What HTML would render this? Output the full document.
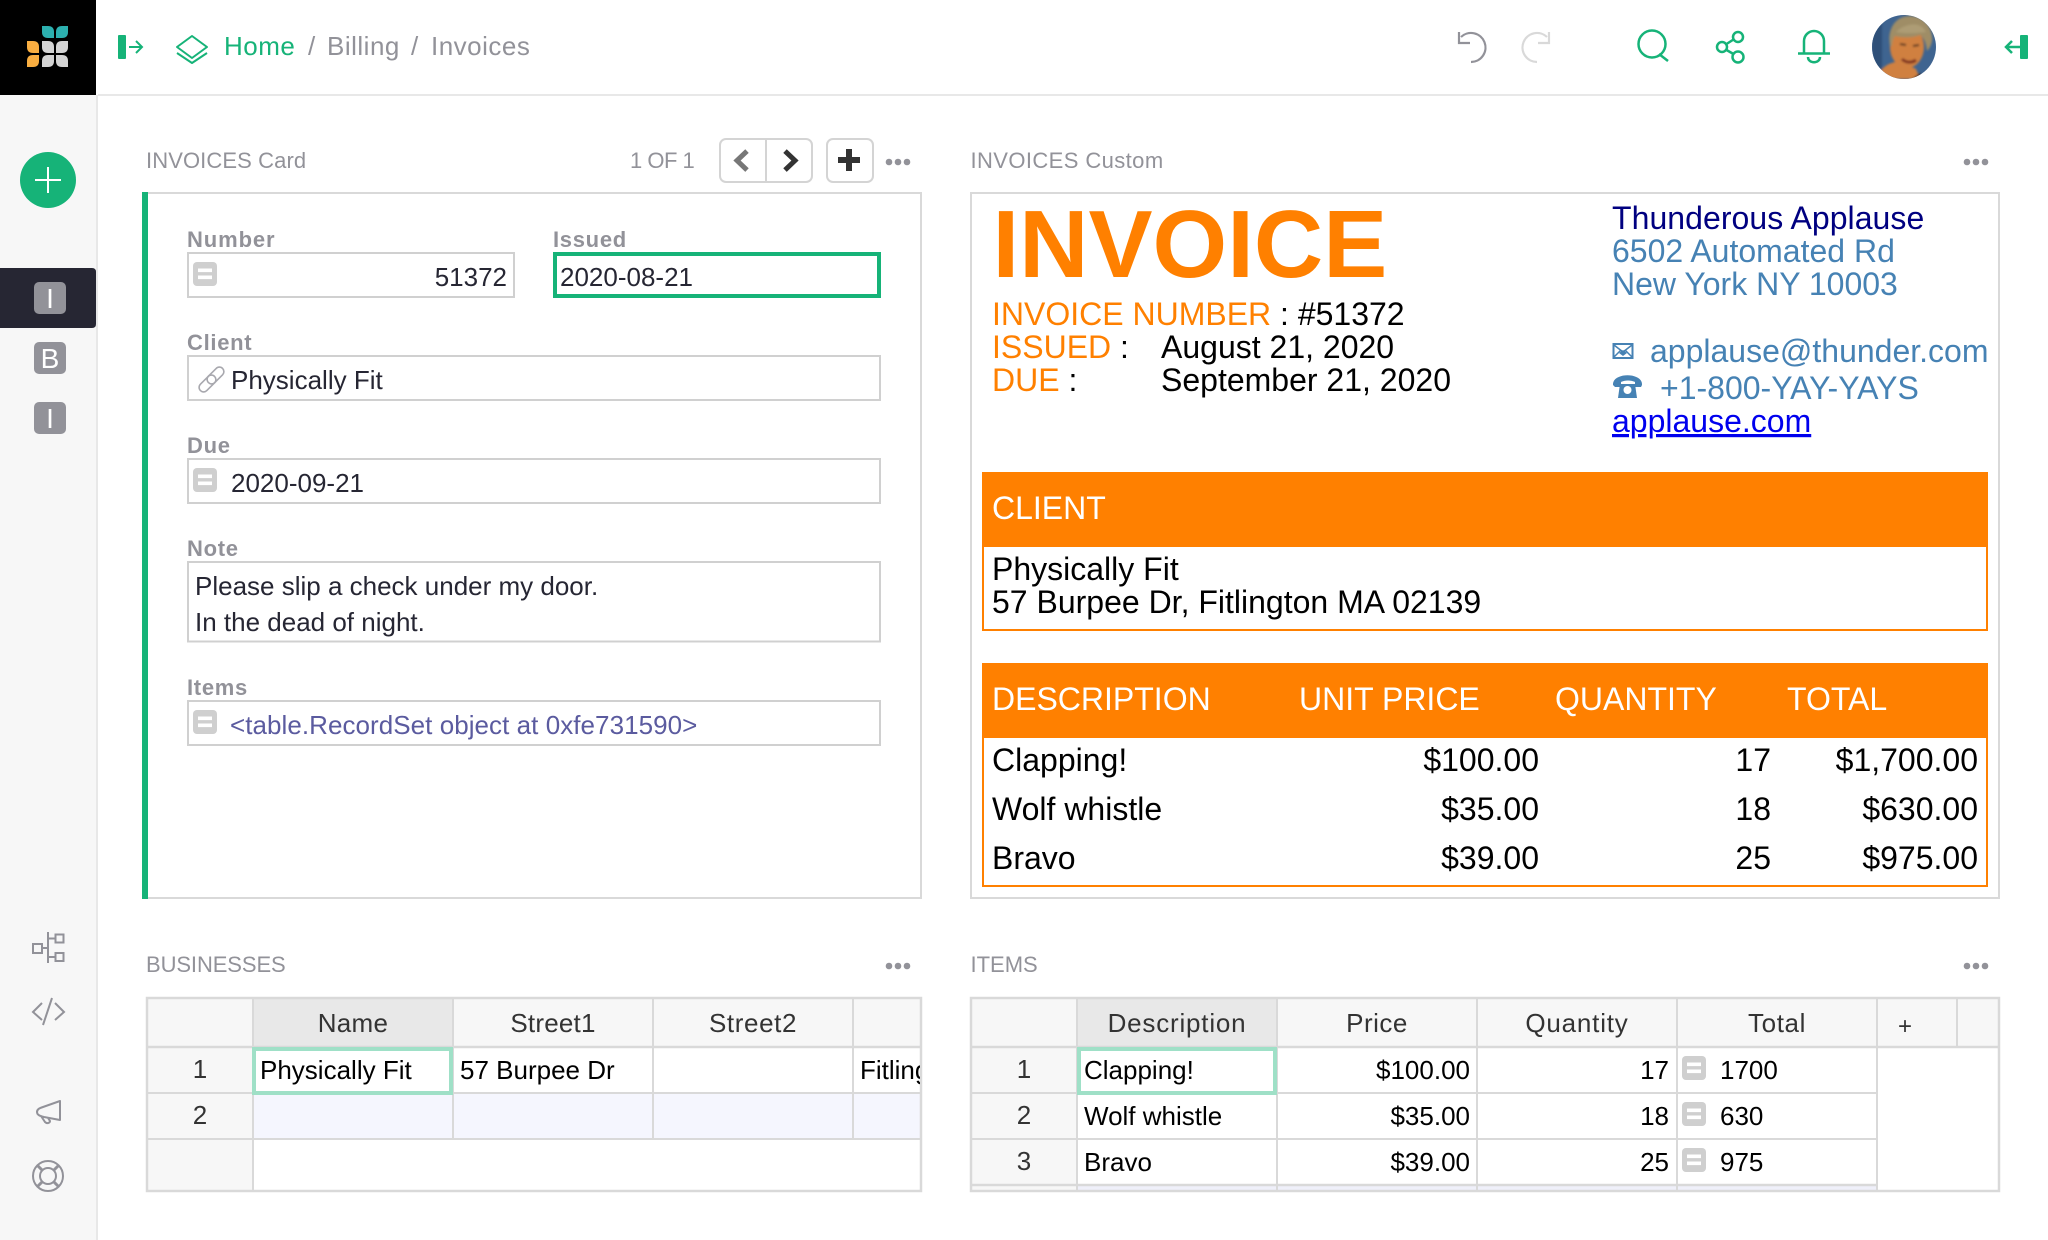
<!DOCTYPE html>
<html lang="en">
<head>
<meta charset="utf-8">
<title>Invoices</title>
<style>
html,body{margin:0;padding:0;background:#fff;width:2048px;height:1240px;overflow:hidden}
svg{display:block}
text{font-family:"Liberation Sans",sans-serif;white-space:pre}
.h{font-size:26px;fill:#929299;letter-spacing:.5px}
.g{font-size:26px;fill:#16b378;letter-spacing:.5px}
.l{font-size:22px;fill:#929299}
.b{font-size:22px;fill:#929299;font-weight:bold;letter-spacing:.7px}
.v{font-size:26px;fill:#262633}
.c{font-size:26px;fill:#000}
.n{font-size:26px;fill:#333;text-anchor:middle}
.e{text-anchor:end}
.i{font-size:32px;fill:#000}
.o{font-size:32px;fill:#ff8000}
.w{font-size:32px;fill:#fff}
.s{font-size:32px;fill:#4682b4}
.m{font-size:28px;fill:#fff;text-anchor:middle}
</style>
</head>
<body>
<svg width="2048" height="1240" viewBox="0 0 2048 1240" xmlns="http://www.w3.org/2000/svg">
<defs>
<g id="eq"><rect width="24" height="24" rx="4" fill="#cfcfcf"/><rect x="5" y="6.5" width="14" height="3.6" fill="#fff"/><rect x="5" y="13.5" width="14" height="3.6" fill="#fff"/></g>
<clipPath id="av"><circle cx="1904" cy="47" r="32"/></clipPath>
<clipPath id="fit"><rect x="853" y="1048" width="67" height="45"/></clipPath>
<filter id="bl" x="-10%" y="-10%" width="120%" height="120%"><feGaussianBlur stdDeviation="1"/></filter>
</defs>

<!-- sidebar + header -->
<rect x="0" y="95" width="96" height="1145" fill="#f7f7f7"/>
<rect x="96" y="95" width="2" height="1145" fill="#e8e8e8"/>
<rect x="98" y="94" width="1950" height="2" fill="#e8e8e8"/>
<rect x="0" y="0" width="96" height="95" fill="#000"/>

<!-- logo -->
<g>
<path d="M42 26h6q6 0 6 6v6h-6q-6 0-6-6z" fill="#2cb0af"/>
<path d="M68 26h-6q-6 0-6 6v6h6q6 0 6-6z" fill="#2cb0af"/>
<path d="M27 41h6q6 0 6 6v6h-6q-6 0-6-6z" fill="#f9ae41"/>
<path d="M42 41h6q6 0 6 6v6h-6q-6 0-6-6z" fill="#d4d4d4"/>
<path d="M68 41h-6q-6 0-6 6v6h6q6 0 6-6z" fill="#d4d4d4"/>
<path d="M27 67h6q6 0 6-6v-6h-6q-6 0-6 6z" fill="#f9ae41"/>
<path d="M42 67h6q6 0 6-6v-6h-6q-6 0-6 6z" fill="#d4d4d4"/>
<path d="M68 67h-6q-6 0-6-6v-6h6q6 0 6 6z" fill="#d4d4d4"/>
</g>

<!-- left sidebar items -->
<circle cx="48" cy="180" r="28" fill="#16b378"/>
<path d="M48 167v26M35 180h26" stroke="#fff" stroke-width="2" fill="none"/>
<path d="M0 268h92q4 0 4 4v52q0 4-4 4H0z" fill="#262633"/>
<rect x="34" y="282" width="32" height="32" rx="5" fill="#929299"/><text class="m" x="50" y="308">I</text>
<rect x="34" y="342" width="32" height="32" rx="5" fill="#929299"/><text class="m" x="50" y="368">B</text>
<rect x="34" y="402" width="32" height="32" rx="5" fill="#929299"/><text class="m" x="50" y="428">I</text>

<g fill="none" stroke="#929299" stroke-width="2">
<path d="M33 944h9v9h-9zM55.500 934.500h8v8h-8zM55.500 953h8v8h-8zM48 932v31M42 948h6M48 938.500h7.500M48 957h7.500"/>
<path d="M42 1003l-9 9 9 8M52 998l-9 27M55 1003l9 9-9 8"/>
<path d="M60 1101v19l-16-3c-4-1-7-2-7-5s3-4 6-5zM41 1116l4 6c2 2 5 1 5-1l-2-3" stroke-linejoin="round"/>
<circle cx="48" cy="1176" r="15"/><circle cx="48" cy="1176" r="8"/>
<path d="M37.500 1165.500l5 5M58.500 1165.500l-5 5M37.500 1186.500l5-5M58.500 1186.500l-5-5" stroke-width="3"/>
</g>

<!-- header left -->
<rect x="118" y="35" width="8" height="24" rx="1" fill="#16b378"/>
<path d="M129 47h12M136 41l6 6-6 6" fill="none" stroke="#16b378" stroke-width="2"/>
<path d="M192 36l15 11-15 11-15-11z" fill="none" stroke="#16b378" stroke-width="2" stroke-linejoin="round"/>
<path d="M177 53l15 10 15-10" fill="none" stroke="#16b378" stroke-width="2" stroke-linejoin="round"/>
<text class="g" x="224" y="55">Home</text>
<text class="h" x="308" y="55">/</text>
<text class="h" x="327" y="55">Billing</text>
<text class="h" x="411" y="55">/</text>
<text class="h" x="431" y="55">Invoices</text>

<!-- header right -->
<g fill="none" stroke-width="2.200">
<path d="M1459 32v11h11M1461 37A14.500 14.500 0 1 1 1471 62" stroke="#929299"/>
<path d="M1549 32v11h-11M1547 37A14.500 14.500 0 1 0 1537 62" stroke="#d9d9d9"/>
<g stroke="#16b378" stroke-width="2.500">
<circle cx="1652" cy="44" r="13.500"/><path d="M1659 54l9 7"/>
<circle cx="1722" cy="47" r="5"/><circle cx="1738" cy="37" r="5"/><circle cx="1738" cy="57" r="5.500"/>
<path d="M1726.500 44l7-4.500M1726.500 50l7 4"/>
<path d="M1798 53.500h32M1804 53v-12a10 10 0 0 1 20 0v12M1808 57c0 7 12 7 12 0"/>
<path d="M2020 47h-14M2012 41l-6 6 6 6"/>
</g>
</g>
<rect x="2020" y="35" width="8" height="24" rx="1" fill="#16b378"/>

<!-- avatar -->
<g clip-path="url(#av)">
<rect x="1872" y="15" width="64" height="64" fill="#3f6490"/>
<g filter="url(#bl)">
<rect x="1872" y="15" width="10" height="64" fill="#2f4f78"/>
<path d="M1878 79c2-12 10-16 22-18l16 8 4 10z" fill="#d0803f"/>
<path d="M1876 70l10 9h-14zM1912 79l8-6 4 6z" fill="#262228"/>
<ellipse cx="1907" cy="47" rx="17" ry="21" fill="#d0803f"/>
<path d="M1890 46c-3-15 4-30 20-30 15 0 23 12 22 25-1 5-3 8-5 10-1-8-3-13-7-16-8 3-18 3-25 1-2 3-3 6-3 10z" fill="#9f8d66"/>
<path d="M1896 32c8-8 24-12 30 0-8 1-20 2-30 0z" fill="#ad9c74"/>
<path d="M1900 44l6 1M1913 46l6-1" stroke="#5a3820" stroke-width="2"/>
<path d="M1902 59c4 4 10 4 14 1" stroke="#7f3020" stroke-width="3" fill="none"/>
</g>
</g>

<!-- panel titles -->
<text class="l" x="146" y="168" style="letter-spacing:.1px">INVOICES Card</text>
<text class="l" x="630" y="168" style="letter-spacing:-.5px">1 OF 1</text>
<text class="l" x="970.500" y="168" style="letter-spacing:.4px">INVOICES Custom</text>
<text class="l" x="146" y="972" style="letter-spacing:-.1px">BUSINESSES</text>
<text class="l" x="970.500" y="972">ITEMS</text>
<g fill="#929299">
<circle cx="889" cy="162" r="3.300"/><circle cx="898" cy="162" r="3.300"/><circle cx="907" cy="162" r="3.300"/>
<circle cx="1967" cy="162" r="3.300"/><circle cx="1976" cy="162" r="3.300"/><circle cx="1985" cy="162" r="3.300"/>
<circle cx="889" cy="966" r="3.300"/><circle cx="898" cy="966" r="3.300"/><circle cx="907" cy="966" r="3.300"/>
<circle cx="1967" cy="966" r="3.300"/><circle cx="1976" cy="966" r="3.300"/><circle cx="1985" cy="966" r="3.300"/>
</g>

<!-- pager buttons -->
<rect x="720" y="139" width="92" height="43" rx="6" fill="#fff" stroke="#d4d4d4" stroke-width="2"/>
<path d="M766 139v43" stroke="#d4d4d4" stroke-width="2"/>
<rect x="827" y="139" width="46" height="43" rx="6" fill="#fff" stroke="#d4d4d4" stroke-width="2"/>
<path d="M747 151l-10 9.500 10 9.500" fill="none" stroke="#777" stroke-width="5"/>
<path d="M785 151l10 9.500-10 9.500" fill="none" stroke="#333" stroke-width="5"/>
<path d="M849 149v22M838 160h22" stroke="#333" stroke-width="6"/>

<!-- left card -->
<rect x="143" y="193" width="778" height="705" fill="#fff" stroke="#d9d9d9" stroke-width="2"/>
<rect x="142" y="192" width="6" height="707" fill="#16b378"/>
<g fill="#fff" stroke="#d0d0d0" stroke-width="2">
<rect x="188" y="253" width="326" height="44"/>
<rect x="188" y="356" width="692" height="44"/>
<rect x="188" y="459" width="692" height="44"/>
<rect x="188" y="562" width="692" height="79.500"/>
<rect x="188" y="701" width="692" height="44"/>
</g>
<rect x="555" y="254" width="324" height="42" fill="#fff" stroke="#16b378" stroke-width="4"/>
<text class="b" x="187" y="247" style="letter-spacing:.9px">Number</text>
<text class="b" x="553" y="247">Issued</text>
<text class="b" x="187" y="350">Client</text>
<text class="b" x="187" y="453">Due</text>
<text class="b" x="187" y="556">Note</text>
<text class="b" x="187" y="695">Items</text>
<use href="#eq" x="193" y="262"/>
<text class="v e" x="507" y="286">51372</text>
<text class="v" x="560" y="286">2020-08-21</text>
<g fill="none" stroke="#a8a8ae" stroke-width="1.600">
<rect x="197.500" y="379" width="20" height="9" rx="4.500" transform="rotate(-45 207.500 383.500)"/>
<rect x="205.500" y="371" width="20" height="9" rx="4.500" transform="rotate(-45 215.500 375.500)"/>
</g>
<text class="v" x="231" y="389">Physically Fit</text>
<use href="#eq" x="193" y="468"/>
<text class="v" x="231" y="492">2020-09-21</text>
<text class="v" x="195" y="595">Please slip a check under my door.</text>
<text class="v" x="195" y="631">In the dead of night.</text>
<use href="#eq" x="193" y="710"/>
<text class="v" x="230" y="734" style="fill:#5b5b9f;letter-spacing:.05px">&lt;table.RecordSet object at 0xfe731590&gt;</text>

<!-- invoice custom card -->
<rect x="971" y="193" width="1028" height="705" fill="#fff" stroke="#d9d9d9" stroke-width="2"/>
<text x="992.500" y="277" style="font-size:96px;font-weight:bold;fill:#ff8000">INVOICE</text>
<text class="o" x="992" y="325">INVOICE NUMBER<tspan style="fill:#000"> : #51372</tspan></text>
<text class="o" x="992" y="358">ISSUED<tspan style="fill:#000"> :</tspan></text>
<text class="i" x="1161" y="358">August 21, 2020</text>
<text class="o" x="992" y="391">DUE<tspan style="fill:#000"> :</tspan></text>
<text class="i" x="1161" y="391">September 21, 2020</text>
<text x="1612" y="229" style="font-size:32px;fill:#000080;letter-spacing:.05px">Thunderous Applause</text>
<text class="s" x="1612" y="262">6502 Automated Rd</text>
<text class="s" x="1612" y="295">New York NY 10003</text>
<rect x="1613.500" y="344" width="19" height="14" fill="none" stroke="#4682b4" stroke-width="2"/>
<path d="M1614 345l9 7 9-7M1614 357l7-7M1632 357l-7-7" fill="none" stroke="#4682b4" stroke-width="1.500"/>
<path d="M1623 350l4 3-4 3-4-3z" fill="#4682b4"/>
<text class="s" x="1650" y="362">applause@thunder.com</text>
<path d="M1613 385c-1-13 30-13 29 0l-1 2h-6v-5c-4-2-10-2-14 0v5h-6z" fill="#4682b4"/>
<path d="M1620 384h15l2 14h-19z" fill="#4682b4"/><circle cx="1627.500" cy="390" r="4" fill="#fff"/>
<text class="s" x="1660" y="399">+1-800-YAY-YAYS</text>
<text x="1612" y="432" style="font-size:32px;fill:#0000ee;text-decoration:underline">applause.com</text>

<rect x="983" y="473" width="1004" height="157" fill="#fff" stroke="#ff8000" stroke-width="2"/>
<rect x="982" y="472" width="1006" height="75" fill="#ff8000"/>
<text class="w" x="992" y="519">CLIENT</text>
<text class="i" x="992" y="580">Physically Fit</text>
<text class="i" x="992" y="613">57 Burpee Dr, Fitlington MA 02139</text>

<rect x="983" y="664" width="1004" height="222" fill="#fff" stroke="#ff8000" stroke-width="2"/>
<rect x="982" y="663" width="1006" height="75" fill="#ff8000"/>
<text class="w" x="992" y="710">DESCRIPTION</text>
<text class="w" x="1299" y="710">UNIT PRICE</text>
<text class="w" x="1555" y="710">QUANTITY</text>
<text class="w" x="1787" y="710">TOTAL</text>
<text class="i" x="992" y="771">Clapping!</text>
<text class="i" x="992" y="820">Wolf whistle</text>
<text class="i" x="992" y="869">Bravo</text>
<text class="i e" x="1539" y="771">$100.00</text>
<text class="i e" x="1539" y="820">$35.00</text>
<text class="i e" x="1539" y="869">$39.00</text>
<text class="i e" x="1771" y="771">17</text>
<text class="i e" x="1771" y="820">18</text>
<text class="i e" x="1771" y="869">25</text>
<text class="i e" x="1978" y="771">$1,700.00</text>
<text class="i e" x="1978" y="820">$630.00</text>
<text class="i e" x="1978" y="869">$975.00</text>

<!-- businesses table -->
<rect x="146" y="997" width="776" height="50" fill="#f7f7f7"/>
<rect x="146" y="1047" width="107" height="144" fill="#f7f7f7"/>
<rect x="253" y="998" width="200" height="49" fill="#e8e8e8"/>
<rect x="253" y="1093" width="669" height="46" fill="#f5f6fe"/>
<g stroke="#d9d9d9" stroke-width="2" fill="none">
<path d="M253 997v194M453 997v142M653 997v142M853 997v142M146 1093h776M146 1139h776"/>
<path d="M146 1047h776" stroke-width="2.500"/>
<rect x="147" y="998" width="774" height="193" stroke-width="2.500"/>
</g>
<rect x="254" y="1049" width="197" height="44" fill="#fff" stroke="#9fe0c7" stroke-width="4"/>
<text class="n" x="353" y="1032" style="letter-spacing:.3px">Name</text>
<text class="n" x="553" y="1032" style="letter-spacing:.2px">Street1</text>
<text class="n" x="753" y="1032" style="letter-spacing:.6px">Street2</text>
<text class="n" x="200" y="1078">1</text>
<text class="n" x="200" y="1124">2</text>
<text class="c" x="260" y="1079">Physically Fit</text>
<text class="c" x="460" y="1079">57 Burpee Dr</text>
<g clip-path="url(#fit)"><text class="c" x="860" y="1079">Fitlington</text></g>

<!-- items table -->
<rect x="970" y="997" width="1030" height="50" fill="#f7f7f7"/>
<rect x="970" y="1047" width="107" height="144" fill="#f7f7f7"/>
<rect x="1077" y="998" width="200" height="49" fill="#e8e8e8"/>
<rect x="1077" y="1186" width="800" height="5" fill="#eff0fa"/>
<g stroke="#d9d9d9" stroke-width="2" fill="none">
<path d="M1077 997v194M1277 997v194M1477 997v194M1677 997v194M1877 997v194M1957 997v50M970 1093h907M970 1139h907"/>
<path d="M970 1047h1030M970 1185h907" stroke-width="2.500"/>
<rect x="971" y="998" width="1028" height="193" stroke-width="2.500"/>
</g>
<rect x="1079" y="1049" width="196" height="44" fill="#fff" stroke="#9fe0c7" stroke-width="4"/>
<text class="n" x="1177" y="1032" style="letter-spacing:.8px">Description</text>
<text class="n" x="1377" y="1032" style="letter-spacing:.5px">Price</text>
<text class="n" x="1577" y="1032" style="letter-spacing:.8px">Quantity</text>
<text class="n" x="1777" y="1032" style="letter-spacing:.6px">Total</text>
<text class="n" x="1905" y="1034" style="font-size:24px">+</text>
<text class="n" x="1024" y="1078">1</text>
<text class="n" x="1024" y="1124">2</text>
<text class="n" x="1024" y="1170">3</text>
<text class="c" x="1084" y="1079">Clapping!</text>
<text class="c" x="1084" y="1125">Wolf whistle</text>
<text class="c" x="1084" y="1171">Bravo</text>
<text class="c e" x="1470" y="1079">$100.00</text>
<text class="c e" x="1470" y="1125">$35.00</text>
<text class="c e" x="1470" y="1171">$39.00</text>
<text class="c e" x="1669" y="1079">17</text>
<text class="c e" x="1669" y="1125">18</text>
<text class="c e" x="1669" y="1171">25</text>
<use href="#eq" x="1682" y="1056"/><text class="c" x="1720" y="1079">1700</text>
<use href="#eq" x="1682" y="1102"/><text class="c" x="1720" y="1125">630</text>
<use href="#eq" x="1682" y="1148"/><text class="c" x="1720" y="1171">975</text>
</svg>
</body>
</html>
